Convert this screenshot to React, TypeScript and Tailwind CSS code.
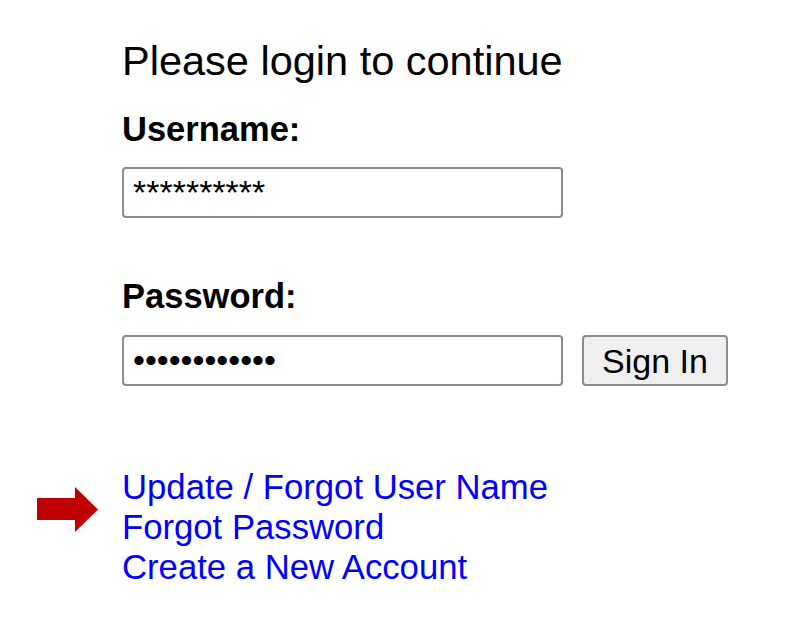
import React from "react";

export default function App() {
  return (
    <div
      className="min-h-[634px] w-[786px] bg-white pl-[122px] pt-[37px] text-black"
      style={{ fontFamily: '"Liberation Sans", Arial, sans-serif' }}
    >
      <h1 className="m-0 text-[41.5px] font-normal leading-[48px]">Please login to continue</h1>

      <form className="flex flex-col" onSubmit={(e) => e.preventDefault()}>
        <label htmlFor="username" className="mt-[24px] text-[34.5px] font-bold leading-[40px]">
          Username:
        </label>
        <input
          id="username"
          type="text"
          readOnly
          value="**********"
          className="mt-[18px] h-[51px] w-[441px] rounded-[4px] border-2 border-[#8c8c8c] bg-white px-[9px] text-[34px] text-black outline-none"
          style={{ fontFamily: '"Liberation Sans", Arial, sans-serif' }}
        />

        <label htmlFor="password" className="mt-[58px] text-[34.5px] font-bold leading-[40px]">
          Password:
        </label>
        <div className="mt-[19px] flex items-center gap-[19px]">
          <input
            id="password"
            type="text"
            readOnly
            value="••••••••••••"
            className="h-[51px] w-[441px] rounded-[4px] border-2 border-[#8c8c8c] bg-white px-[9px] text-[34px] text-black outline-none"
            style={{ fontFamily: '"Liberation Sans", Arial, sans-serif' }}
          />
          <button
            type="submit"
            className="h-[51px] w-[146px] rounded-[4px] border-2 border-[#8c8c8c] bg-[#efefef] text-[34px] leading-none text-black"
            style={{ fontFamily: '"Liberation Sans", Arial, sans-serif' }}
          >
            Sign In
          </button>
        </div>
      </form>

      <div className="relative mt-[81px] flex flex-col text-[34.7px] leading-[40px] text-[#0000ff]">
        <svg
          className="absolute left-[-85px] top-[20px]"
          width="62"
          height="45"
          viewBox="0 0 62 45"
        >
          <rect x="0" y="11" width="39" height="22" fill="#c00000" />
          <polygon points="38,0 61,22.5 38,45" fill="#c00000" />
        </svg>
        <a href="#" className="w-fit text-[#0000ff] no-underline">
          Update / Forgot User Name
        </a>
        <a href="#" className="w-fit text-[#0000ff] no-underline">
          Forgot Password
        </a>
        <a href="#" className="w-fit text-[#0000ff] no-underline">
          Create a New Account
        </a>
      </div>
    </div>
  );
}
